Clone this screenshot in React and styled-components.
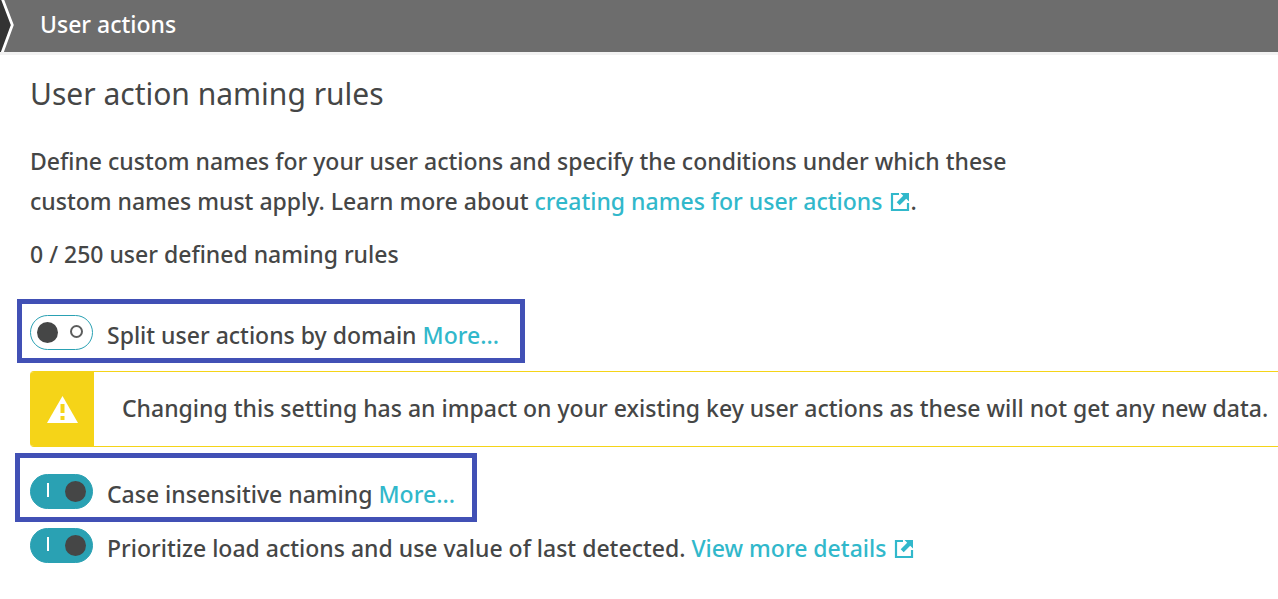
import React from "react";
import styled, { createGlobalStyle } from "styled-components";

const GlobalStyle = createGlobalStyle`
  *, *::before, *::after { box-sizing: border-box; }
  body {
    margin: 0;
    background: #fff;
    color: #454646;
    font-family: "Noto Sans", "Open Sans", sans-serif;
    font-size: 23px;
    font-weight: 500;
    line-height: 40px;
    overflow-x: hidden;
  }
`;

const Header = styled.header`
  display: flex;
  align-items: center;
  height: 55px;
  background: #6d6d6d;
  border-bottom: 3px solid #f2f2f2;
  color: #fff;
`;

const Chevron = styled.svg`
  width: 16px;
  height: 52px;
  flex: none;
`;

const Crumb = styled.span`
  margin-left: 24px;
  padding-bottom: 4px;
`;

const Main = styled.main`
  padding: 18px 0 30px 30px;
`;

const Title = styled.h1`
  margin: 0;
  font-size: 30px;
  font-weight: 400;
  line-height: 42px;
`;

const Text = styled.p`
  margin: ${(p) => p.$top}px 0 0;
  max-width: 1020px;
`;

const Link = styled.a`
  color: #31b8cb;
  text-decoration: none;
  white-space: nowrap;
`;

const LinkIcon = styled.svg`
  width: 20px;
  height: 20px;
  margin-left: ${(p) => p.$gap}px;
  vertical-align: -2px;
`;

const Setting = styled.div`
  display: flex;
  align-items: flex-start;
  gap: 14px;
`;

const Highlight = styled.div`
  width: fit-content;
  border: 5px solid #4150b5;
  margin: ${(p) => p.$margin};
  padding: ${(p) => p.$padding};
`;

const Switch = styled.input`
  appearance: none;
  position: relative;
  flex: none;
  width: 63px;
  height: 35px;
  margin: 0;
  border: 1px solid #2aa1b3;
  border-radius: 18px;
  background: #fff;
  cursor: pointer;

  &::before {
    content: "";
    position: absolute;
    top: 6px;
    left: 6px;
    width: 21px;
    height: 21px;
    border-radius: 50%;
    background: #454646;
  }
  &::after {
    content: "";
    position: absolute;
    top: 9px;
    left: 39px;
    width: 13px;
    height: 13px;
    border: 2px solid #5c5d5d;
    border-radius: 50%;
  }
  &:checked { background: #2aa1b3; }
  &:checked::before { left: 34px; }
  &:checked::after {
    top: 8px;
    left: 16px;
    width: 2px;
    height: 14px;
    border: 0;
    border-radius: 0;
    background: #fff;
  }
`;

const SettingText = styled.div`
  white-space: nowrap;
`;

const Alert = styled.div`
  display: flex;
  height: 76px;
  margin-top: 8px;
  border: 1px solid #f5d418;
  border-width: 1px 0;
  border-radius: 4px 0 0 4px;
  overflow: hidden;
`;

const AlertBadge = styled.div`
  display: flex;
  align-items: center;
  justify-content: center;
  flex: none;
  width: 64px;
  background: #f5d418;
`;

const AlertText = styled.p`
  margin: 0;
  padding: 16px 0 0 28px;
  white-space: nowrap;
`;

function ExternalIcon({ gap }) {
  return (
    <LinkIcon $gap={gap} viewBox="0 0 20 20" fill="none" aria-hidden="true">
      <path d="M9 2H2v16h16v-7" stroke="currentColor" strokeWidth="2.2" />
      <path
        d="M10.500 1H19v8.500l-2.800-2.700-6.500 6.500-3-3 6.500-6.500z"
        fill="currentColor"
      />
    </LinkIcon>
  );
}

function SettingRow({ id, label, on, children }) {
  return (
    <Setting>
      <Switch type="checkbox" id={id} defaultChecked={on} />
      <SettingText>
        <label htmlFor={id}>{label}</label> {children}
      </SettingText>
    </Setting>
  );
}

export default function App() {
  return (
    <>
      <GlobalStyle />
      <Header>
        <Chevron viewBox="0 0 16 52" aria-hidden="true">
          <path d="M0 0h3l9 25-10 27H0z" fill="#333" />
          <path d="M2-2l10.300 27L2 53" fill="none" stroke="#fff" strokeWidth="2.800" />
        </Chevron>
        <Crumb>User actions</Crumb>
      </Header>
      <Main>
        <Title>User action naming rules</Title>
        <Text $top={26}>
          Define custom names for your user actions and specify the conditions
          under which these custom names must apply. Learn more about{" "}
          <Link href="#naming">
            creating names for user actions
            <ExternalIcon gap={8} />
          </Link>
          .
        </Text>
        <Text $top={13}>0 / 250 user defined naming rules</Text>
        <Highlight $margin="25px 0 0 -13px" $padding="11px 21px 3px 8px">
          <SettingRow id="split" label="Split user actions by domain">
            <Link href="#split-more">More...</Link>
          </SettingRow>
        </Highlight>
        <Alert role="note">
          <AlertBadge>
            <svg width="31" height="27" viewBox="0 0 31 27" aria-hidden="true">
              <path d="M15.500 0L31 27H0z" fill="#fff" />
              <path d="M13.500 8h4v9h-4zM13.500 20h4v4h-4z" fill="#f5d418" />
            </svg>
          </AlertBadge>
          <AlertText>
            Changing this setting has an impact on your existing key user
            actions as these will not get any new data.
          </AlertText>
        </Alert>
        <Highlight $margin="6px 0 6px -15px" $padding="16px 17px 3px 10px">
          <SettingRow id="case" label="Case insensitive naming" on>
            <Link href="#case-more">More...</Link>
          </SettingRow>
        </Highlight>
        <SettingRow
          id="prioritize"
          label="Prioritize load actions and use value of last detected."
          on
        >
          <Link href="#details">
            View more details
            <ExternalIcon gap={8} />
          </Link>
        </SettingRow>
      </Main>
    </>
  );
}
